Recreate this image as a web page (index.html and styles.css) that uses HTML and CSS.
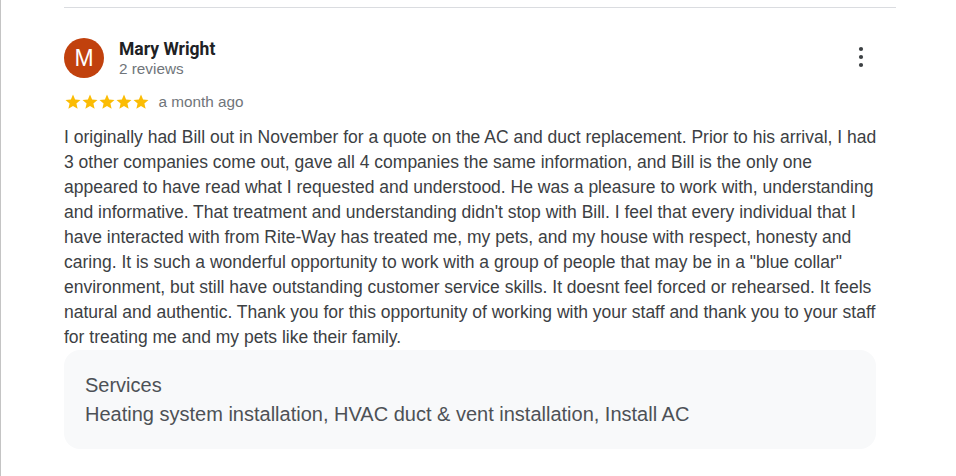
FILE: index.html
```html
<!DOCTYPE html>
<html lang="en">
<head>
<meta charset="utf-8">
<title>Review</title>
<link rel="stylesheet" href="styles.css">
</head>
<body>
<div class="page">
  <div class="review">
    <hr class="divider">
    <div class="head">
      <div class="avatar">M</div>
      <div class="who">
        <div class="name">Mary Wright</div>
        <div class="count">2 reviews</div>
      </div>
      <button class="more" aria-label="More">
        <svg width="24" height="24" viewBox="0 0 24 24"><circle cx="12" cy="4" r="2.1" fill="#3c4043"/><circle cx="12" cy="12" r="2.1" fill="#3c4043"/><circle cx="12" cy="20" r="2.1" fill="#3c4043"/></svg>
      </button>
    </div>
    <div class="meta">
      <div class="stars">
        <svg viewBox="0 0 24 24" class="star"><path d="M12 17.27L18.18 21l-1.64-7.03L22 9.24l-7.19-.61L12 2 9.19 8.63 2 9.240l5.46 4.73L5.82 21z"/></svg>
        <svg viewBox="0 0 24 24" class="star"><path d="M12 17.27L18.18 21l-1.64-7.03L22 9.24l-7.19-.61L12 2 9.19 8.63 2 9.24l5.46 4.73L5.82 21z"/></svg>
        <svg viewBox="0 0 24 24" class="star"><path d="M12 17.27L18.18 21l-1.64-7.03L22 9.24l-7.19-.61L12 2 9.19 8.63 2 9.24l5.46 4.73L5.82 21z"/></svg>
        <svg viewBox="0 0 24 24" class="star"><path d="M12 17.27L18.18 21l-1.64-7.03L22 9.24l-7.19-.61L12 2 9.19 8.63 2 9.24l5.46 4.73L5.82 21z"/></svg>
        <svg viewBox="0 0 24 24" class="star"><path d="M12 17.27L18.18 21l-1.64-7.03L22 9.24l-7.19-.61L12 2 9.19 8.63 2 9.24l5.46 4.73L5.82 21z"/></svg>
      </div>
      <span class="when">a month ago</span>
    </div>
    <p class="text">I originally had Bill out in November for a quote on the AC and duct replacement. Prior to his arrival, I had 3 other companies come out, gave all 4 companies the same information, and Bill is the only one appeared to have read what I requested and understood. He was a pleasure to work with, understanding and informative. That treatment and understanding didn't stop with Bill. I feel that every individual that I have interacted with from Rite-Way has treated me, my pets, and my house with respect, honesty and caring. It is such a wonderful opportunity to work with a group of people that may be in a "blue collar" environment, but still have outstanding customer service skills. It doesnt feel forced or rehearsed. It feels natural and authentic. Thank you for this opportunity of working with your staff and thank you to your staff for treating me and my pets like their family.</p>
    <div class="services">
      <div class="svc-title">Services</div>
      <div class="svc-list">Heating system installation, HVAC duct &amp; vent installation, Install AC</div>
    </div>
  </div>
</div>
</body>
</html>
```
FILE: styles.css
```css
html, body {
  margin: 0;
  padding: 0;
  background: #ffffff;
}
body {
  font-family: "Liberation Sans", Arial, sans-serif;
  color: #3c4043;
}
.page {
  height: 476px;
  border-left: 1px solid #c4c4c4;
  box-sizing: border-box;
  padding: 7px 0 0 63px;
}
.review {
  width: 832px;
}
.divider {
  margin: 0;
  border: 0;
  border-top: 1px solid #dadce0;
  height: 0;
}
.head {
  display: flex;
  align-items: flex-start;
  margin-top: 30px;
}
.avatar {
  width: 40px;
  height: 40px;
  border-radius: 50%;
  background: #c1410d;
  color: #fff;
  font-size: 23px;
  line-height: 40px;
  text-align: center;
  flex: none;
}
.who {
  margin-left: 15px;
  flex: 1;
  padding-top: 1px;
}
.name {
  font-family: Roboto, "Liberation Sans", sans-serif;
  font-weight: 700;
  font-size: 17.5px;
  line-height: 20px;
  color: #202124;
}
.count {
  font-size: 15.3px;
  line-height: 20px;
  color: #70757a;
}
.more {
  border: 0;
  background: none;
  padding: 0;
  width: 24px;
  height: 24px;
  margin: 7px 23px 0 0;
  display: flex;
}
.meta {
  display: flex;
  align-items: center;
  margin-top: 14px;
  height: 18px;
}
.stars {
  display: flex;
}
.star {
  width: 18px;
  height: 18px;
  margin-right: -0.9px;
  fill: #fbbc04;
}
.when {
  margin-left: 9px;
  font-size: 15.3px;
  color: #70757a;
}
.text {
  margin: 14px 0 0;
  width: 820px;
  font-size: 17.5px;
  line-height: 25px;
  color: #3c4043;
}
.services {
  margin-top: 0;
  width: 812px;
  box-sizing: border-box;
  background: #f8f9fa;
  border-radius: 16px;
  padding: 21px 21px 20px;
  font-size: 20px;
  line-height: 29px;
  color: #4d5156;
}
```
